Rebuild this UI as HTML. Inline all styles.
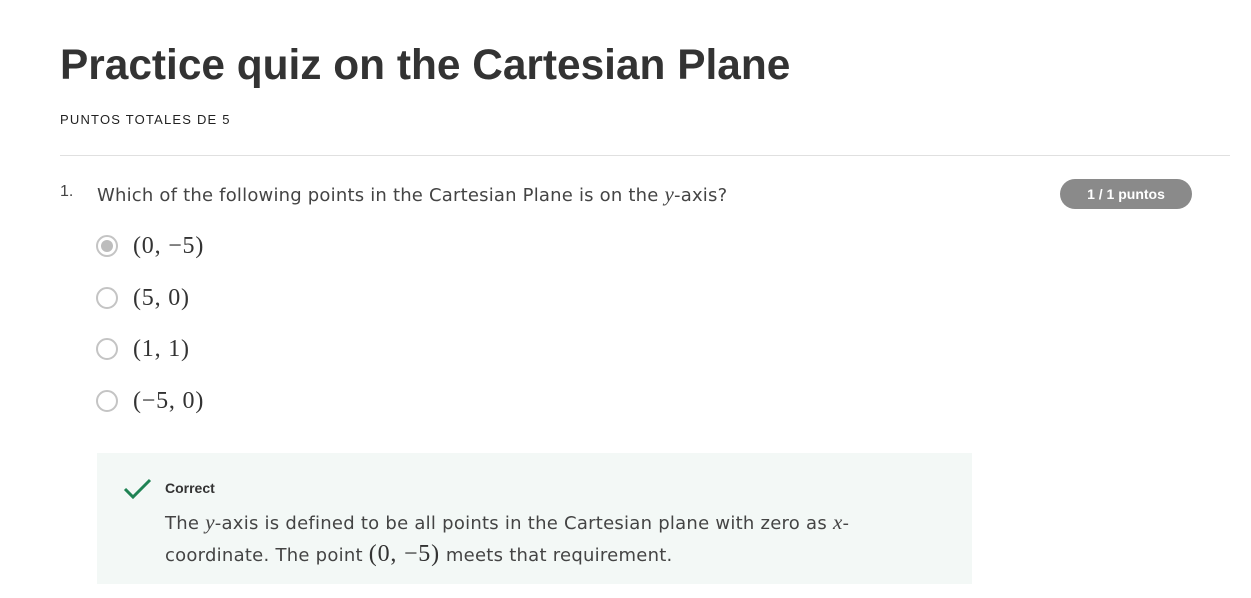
<!DOCTYPE html>
<html><head><meta charset="utf-8"><style>
body{margin:0;background:#fff;font-family:"Liberation Sans",sans-serif;color:#333;width:1251px;height:598px;overflow:hidden;position:relative}
.a{position:absolute;white-space:nowrap}
.t{font-family:"DejaVu Sans",sans-serif;font-size:18px;color:#444;letter-spacing:.2px}
.m{font-family:"Liberation Serif",serif;font-size:24px;color:#333;letter-spacing:.8px}
.mi{font-family:"Liberation Serif",serif;font-style:italic;font-size:21px}
.radio{position:absolute;left:96px;width:22px;height:22px;border:2px solid #c4c4c4;border-radius:50%;box-sizing:border-box;background:#fff}
</style></head><body>
<div class="a" style="left:60px;top:41px;font-size:42.4px;font-weight:bold;color:#333">Practice quiz on the Cartesian Plane</div>
<div class="a" style="left:60px;top:112px;font-size:13px;color:#222;letter-spacing:1.2px">PUNTOS TOTALES DE 5</div>
<div class="a" style="left:60px;top:155px;width:1170px;height:1px;background:#e0e0e0"></div>
<div class="a" style="left:60px;top:183px;font-size:16px;color:#444">1.</div>
<div class="a t" style="left:97px;top:182px">Which of the following points in the Cartesian Plane is on the <span class="mi">y</span>-axis?</div>
<div class="a" style="left:1060px;top:179px;width:132px;height:30px;border-radius:15px;background:#8a8a8a;color:#fff;font-weight:bold;font-size:14px;text-align:center;line-height:30px">1 / 1 puntos</div>
<div class="radio" style="top:235px"><div style="position:absolute;left:3px;top:3px;width:12px;height:12px;border-radius:50%;background:#bdbdbd"></div></div>
<div class="a m" style="left:133px;top:233px">(0, −5)</div>
<div class="radio" style="top:287px"></div>
<div class="a m" style="left:133px;top:285px">(5, 0)</div>
<div class="radio" style="top:338px"></div>
<div class="a m" style="left:133px;top:336px">(1, 1)</div>
<div class="radio" style="top:390px"></div>
<div class="a m" style="left:133px;top:388px">(−5, 0)</div>
<div class="a" style="left:97px;top:453px;width:875px;height:131px;background:#f3f8f6"></div>
<svg class="a" style="left:123px;top:478px" width="30" height="22" viewBox="0 0 30 22"><path d="M2 11 L10 19 L27 2" fill="none" stroke="#1f8354" stroke-width="3"/></svg>
<div class="a" style="left:165px;top:480px;font-size:14px;font-weight:bold;color:#333">Correct</div>
<div class="a t" style="left:165px;top:507px;line-height:31px;letter-spacing:.25px">The <span class="mi">y</span>-axis is defined to be all points in the Cartesian plane with zero as <span class="mi">x</span>-<br>coordinate. The point <span class="m">(0, −5)</span> meets that requirement.</div>
</body></html>
